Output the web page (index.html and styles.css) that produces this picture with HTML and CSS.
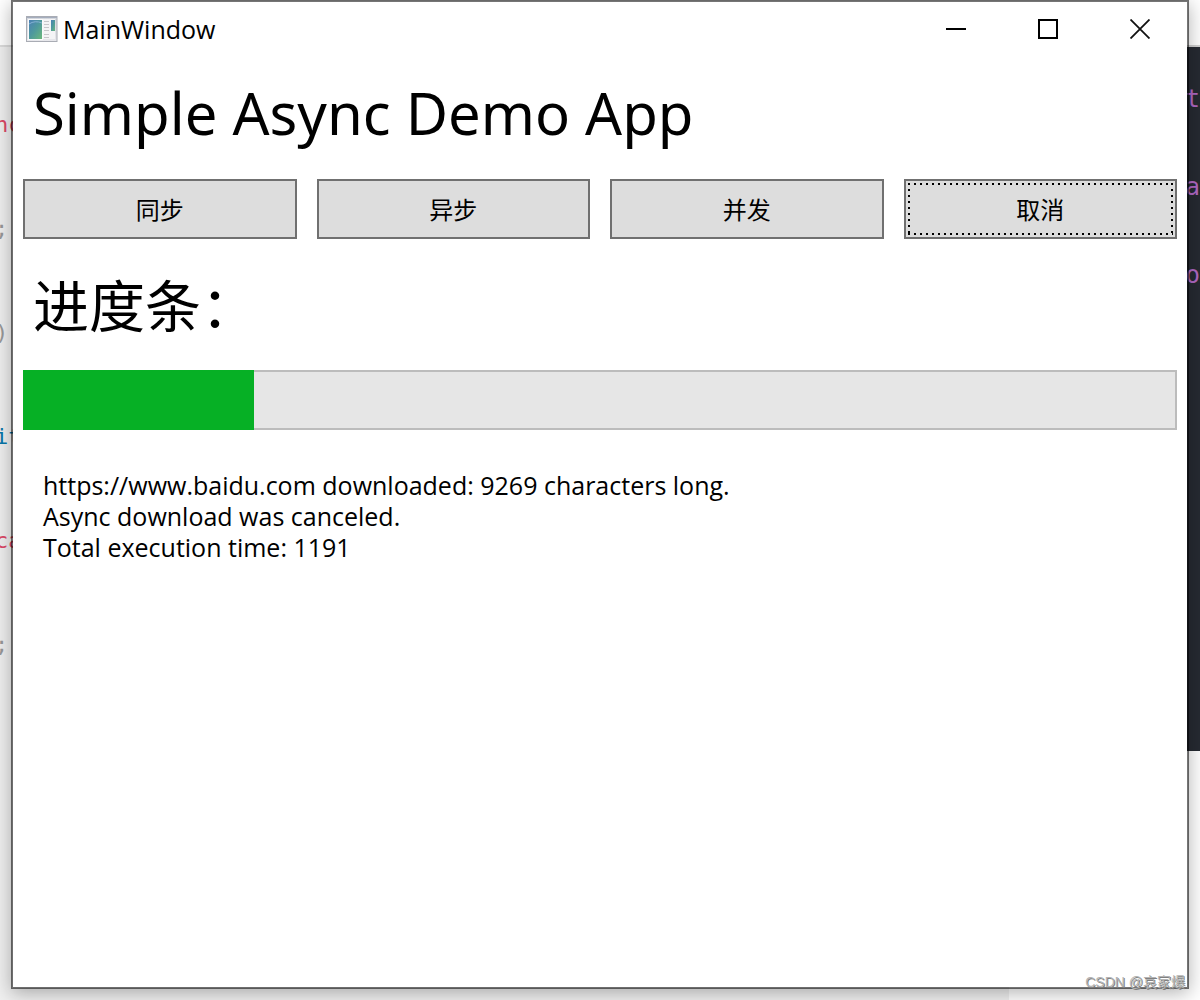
FILE: index.html
```
<!DOCTYPE html>
<html lang="zh-CN">
<head>
<meta charset="utf-8">
<title>MainWindow</title>
<link rel="stylesheet" href="styles.css">
</head>
<body>
<div class="desktop">
  <div class="backdrop" aria-hidden="true">
    <div class="page page-left">
      <div class="code code-light">
        <span class="pink">nc</span>
        <span class="gray">;</span>
        <span class="gray">)</span>
        <span class="blue">it</span>
        <span class="pink">ca</span>
        <span class="gray">;</span>
      </div>
    </div>
    <div class="page page-right">
      <div class="code code-dark">
        <span>t</span>
        <span>a</span>
        <span>o</span>
      </div>
    </div>
  </div>

  <main class="window">
    <header class="titlebar">
      <svg class="app-icon" viewBox="0 0 32 26" width="32" height="26" aria-hidden="true">
        <defs>
          <linearGradient id="pane" x1="0" y1="0" x2="1" y2="1">
            <stop offset="0" stop-color="#4a7fb5"/>
            <stop offset="0.5" stop-color="#4f9a9c"/>
            <stop offset="1" stop-color="#6cb87c"/>
          </linearGradient>
          <linearGradient id="frame" x1="0" y1="0" x2="0" y2="1">
            <stop offset="0" stop-color="#d3d6dc"/>
            <stop offset="1" stop-color="#e8e8ec"/>
          </linearGradient>
        </defs>
        <rect x="0.5" y="0.5" width="30.500" height="25" fill="url(#frame)" stroke="#a9acb4"/>
        <path d="M1 1h30v1H1z" fill="#a4adbd"/>
        <rect x="2" y="3" width="15" height="21" fill="#fafafb"/>
        <rect x="17" y="3" width="12" height="20" fill="#f4f4f6"/>
        <rect x="3" y="4" width="13" height="19" fill="url(#pane)"/>
        <path d="M3 8Q9 4 16 7" fill="none" stroke="#86b2d4" stroke-width="1"/>
        <path d="M18 5.500h5M18 8.500h5M18 11.500h5M18 14.500h5M18 18.500h5M18 21.500h5" stroke="#c6c6ca"/>
        <rect x="25" y="4" width="4" height="11" fill="url(#pane)"/>
      </svg>
      <span class="caption">MainWindow</span>
      <button class="control" type="button" aria-label="Minimize">
        <svg viewBox="0 0 20 20" width="20" height="20"><path d="M0 10h20" stroke="#000" stroke-width="2"/></svg>
      </button>
      <button class="control" type="button" aria-label="Maximize">
        <svg viewBox="0 0 20 20" width="20" height="20"><rect x="1" y="1" width="18" height="18" fill="none" stroke="#000" stroke-width="2"/></svg>
      </button>
      <button class="control" type="button" aria-label="Close">
        <svg viewBox="0 0 20 20" width="20" height="20"><path d="M.5.5l19 19M19.500.5l-19 19" stroke="#111" stroke-width="1.800"/></svg>
      </button>
    </header>

    <div class="content">
      <h1 class="heading">Simple Async Demo App</h1>
      <div class="actions">
        <button class="action" type="button">同步</button>
        <button class="action" type="button">异步</button>
        <button class="action" type="button">并发</button>
        <button class="action focused" type="button">取消</button>
      </div>
      <h2 class="heading" id="progress-label">进度条：</h2>
      <div class="progress" role="progressbar" aria-labelledby="progress-label" aria-valuemin="0" aria-valuemax="100" aria-valuenow="20">
        <div class="bar" style="width:20%"></div>
      </div>
      <div class="output">
        <p>https://www.baidu.com downloaded: 9269 characters long.</p>
        <p>Async download was canceled.</p>
        <p>Total execution time: 1191</p>
      </div>
    </div>
  </main>
  <div class="watermark">CSDN @哀家爆</div>
</div>
</body>
</html>
```
FILE: styles.css
```
* { box-sizing: border-box; }

body {
  margin: 0;
  background: #fff;
  color: #000;
  font-family: "Open Sans", "Noto Sans CJK SC", sans-serif;
}

.desktop {
  position: relative;
  display: flex;
  min-height: 100vh;
  padding: 0 11px 11px;
  overflow: hidden;
}

.backdrop {
  position: absolute;
  inset: 0;
  display: flex;
}

.page {
  border-top: 45px solid #fff;
  overflow: hidden;
}

.page-left {
  flex: 1;
  background: #f0f0f0;
}

.page-right {
  width: 191px;
  background: #fff;
}

.code {
  display: flex;
  flex-direction: column;
  font-family: "DejaVu Sans Mono", monospace;
}

.code-light {
  margin-left: -5px;
  padding-top: 26px;
  border-top: 2px solid #dcdcdc;
  font-size: 22px;
  line-height: 104px;
}

.code-dark {
  align-items: flex-end;
  height: 706px;
  padding-top: 8px;
  border-top: 2px solid #d0d0d0;
  background: #262a32;
  color: #b169c5;
  font-size: 24px;
  line-height: 88px;
}

.pink { color: #de4a68; }
.gray { color: #999; }
.blue { color: #0877aa; }

.window {
  position: relative;
  flex: 1;
  display: flex;
  flex-direction: column;
  border: 2px solid rgba(0, 0, 0, 0.54);
  background: #fff;
  background-clip: padding-box;
  box-shadow: 0 4px 18px rgba(0, 0, 0, 0.3);
}

.titlebar {
  display: flex;
  align-items: center;
  height: 54px;
  padding: 0 1px 0 13px;
}

.caption {
  flex: 1;
  padding-left: 5px;
  font-size: 25px;
  line-height: 54px;
}

.control {
  display: flex;
  align-items: center;
  justify-content: center;
  width: 92px;
  height: 54px;
  padding: 0;
  border: 0;
  background: none;
}

.content {
  padding: 0 10px;
}

.heading {
  margin: 0;
  padding: 0 10px;
  font-weight: 400;
  line-height: 76px;
}

h1.heading {
  padding-top: 19px;
  font-family: "Noto Sans", sans-serif;
  font-size: 58px;
}

h2.heading {
  padding-top: 26px;
  font-family: "Noto Sans CJK SC", sans-serif;
  font-size: 56px;
}

.actions {
  display: grid;
  grid-template-columns: repeat(4, 1fr);
  gap: 20px;
  margin-top: 28px;
}

.action {
  position: relative;
  height: 60px;
  padding: 0 0 2px;
  border: 2px solid #707070;
  background: #ddd;
  color: #000;
  font: 24px "Noto Sans CJK SC", sans-serif;
}

/* keyboard focus rectangle: 2px dots, 6px apart, on all four sides */
.focused::after {
  content: "";
  position: absolute;
  inset: 2px;
  background:
    linear-gradient(90deg, #000 2px, transparent 2px) top left / 6px 2px repeat-x,
    linear-gradient(90deg, #000 2px, transparent 2px) bottom left / 6px 2px repeat-x,
    linear-gradient(#000 2px, transparent 2px) top left / 2px 6px repeat-y,
    linear-gradient(#000 2px, transparent 2px) top right / 2px 6px repeat-y;
}

.progress {
  height: 60px;
  margin-top: 29px;
  background: #e6e6e6;
  box-shadow: inset 0 0 0 2px #bcbcbc;
}

.bar {
  height: 100%;
  background: #06b025;
}

.output {
  padding: 40px 20px;
  font-size: 25px;
  line-height: 31px;
}

.output p { margin: 0; }

.watermark {
  position: absolute;
  right: 15px;
  bottom: 8px;
  color: #b4b4b4;
  font: 14px/20px "Liberation Sans", "Noto Sans CJK SC", sans-serif;
  text-shadow: 1px 1px 0 #808080;
}
```
